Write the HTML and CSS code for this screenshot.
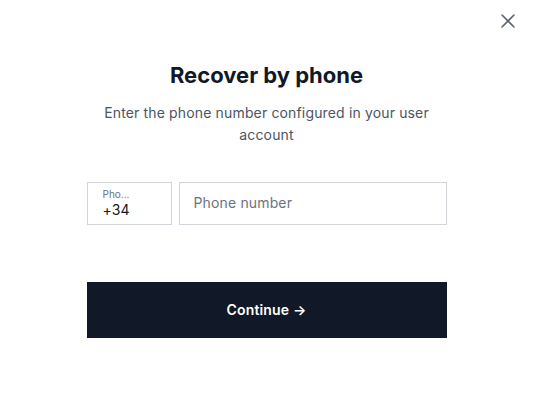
FILE: index.html
```html
<!DOCTYPE html>
<html>
  <head>
    <title>Recover by phone</title>
    <link rel="stylesheet" href="styles.css">
  </head>

  <body>
    <div id="dialog">
      <button class="close" aria-label="Close">
        <svg width="16" height="16" viewBox="0 0 16 16" fill="none">
          <path d="M2 2L14 14M14 2L2 14" stroke="#5b6270" stroke-width="1.6" stroke-linecap="round" />
        </svg>
      </button>

      <div class="content">
        <h1>Recover by phone</h1>
        <p class="lead">Enter the phone number configured in your user account</p>

        <div class="row phone">
          <label class="field prefix">
            <span class="field-label">Pho...</span>
            <span class="field-value">+34</span>
          </label>
          <input type="tel" class="field number" placeholder="Phone number" />
        </div>

        <button class="primary">Continue &rarr;</button>
      </div>
    </div>
  </body>
</html>
```

FILE: styles.css
```css
* {
  box-sizing: border-box;
}

body {
  margin: 0;
  font-family: Inter, "Noto Sans", sans-serif;
  background: #fff;
  color: #111827;
}

#dialog {
  position: relative;
  width: 533px;
  height: 400px;
  padding-top: 60px;
}

.close {
  position: absolute;
  top: 13px;
  right: 17px;
  border: 0;
  background: 0;
  padding: 0;
  width: 16px;
  height: 16px;
  cursor: pointer;
}

.content {
  width: 360px;
  margin: 0 auto;
}

h1 {
  margin: 0;
  font-size: 22px;
  line-height: 30px;
  font-weight: 700;
  text-align: center;
  color: #111827;
}

.lead {
  margin: 12px 0 0;
  padding: 0 4px;
  font-size: 14px;
  line-height: 22px;
  letter-spacing: 0.15px;
  text-align: center;
  color: #4b5563;
}

.row {
  display: flex;
  align-items: center;
}

.phone {
  margin-top: 36px;
  gap: 7px;
}

.field {
  height: 43px;
  border: 1px solid #d1d5db;
  background: #fff;
}

.prefix {
  width: 85px;
  flex: none;
  display: flex;
  flex-direction: column;
  padding: 4px 15px 0;
}

.field-label {
  font-size: 10px;
  line-height: 14px;
  color: #6b7280;
}

.field-value {
  font-size: 14px;
  line-height: 18px;
  letter-spacing: 0.15px;
  color: #111827;
}

.number {
  flex: 1;
  padding: 0 14px 2px;
  font-family: inherit;
  font-size: 14px;
  letter-spacing: 0.15px;
  color: #111827;
  outline: none;
  border-radius: 0;
}

.number::placeholder {
  color: #6b7280;
}

.primary {
  display: block;
  width: 100%;
  height: 56px;
  margin-top: 57px;
  padding-bottom: 2px;
  border: none;
  background-color: #111827;
  color: #fff;
  font-family: inherit;
  font-size: 14px;
  font-weight: 600;
  letter-spacing: 0.15px;
  cursor: pointer;
}
```
